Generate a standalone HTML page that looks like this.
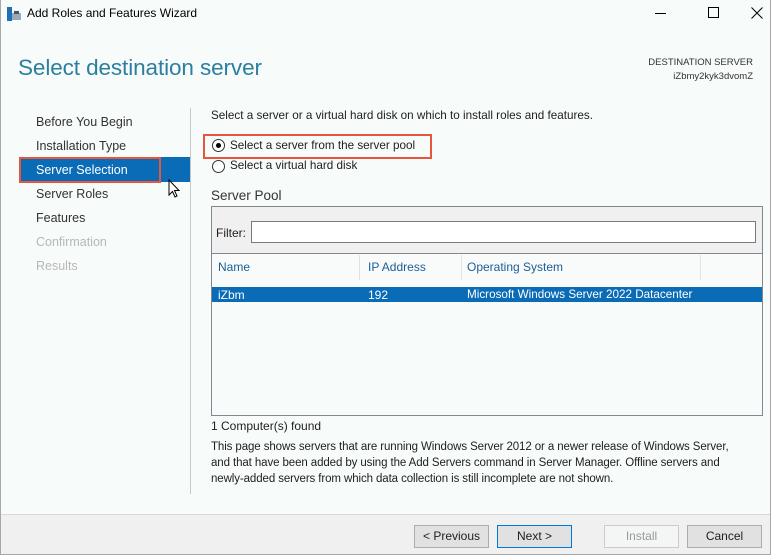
<!DOCTYPE html>
<html><head><meta charset="utf-8"><style>
*{margin:0;padding:0;box-sizing:border-box}
body{width:771px;height:555px;position:relative;background:#f7fbf9;font-family:"Liberation Sans",sans-serif;font-size:12px;color:#1e1e1e;overflow:hidden}
.a{position:absolute;white-space:nowrap}
.win{position:absolute;left:0;top:0;width:771px;height:555px;border:1px solid #a8a8a8;border-top:none}
.btn{position:absolute;top:525px;height:23px;width:75px;background:#e1e1e1;border:1px solid #adadad;text-align:center;line-height:21px;font-size:12px}
.nav{position:absolute;left:36px;font-size:12.5px;color:#333}
</style></head><body>
<div class="win"></div>
<svg class="a" style="left:6px;top:6px" width="16" height="16" viewBox="0 0 16 16"><rect x="1" y="1" width="5" height="14" fill="#1f6fb5"/><rect x="6" y="7" width="9" height="7" fill="#9ab" /><rect x="8" y="5" width="5" height="3" fill="#456"/></svg>
<div class="a" style="left:27px;top:6px;font-size:12px;color:#000">Add Roles and Features Wizard</div>
<div class="a" style="left:655px;top:13px;width:11px;height:1px;background:#000"></div>
<div class="a" style="left:708px;top:7px;width:11px;height:11px;border:1px solid #000"></div>
<svg class="a" style="left:751px;top:7px" width="12" height="12" viewBox="0 0 12 12"><path d="M0.5 0.5L11.5 11.5M11.5 0.5L0.5 11.5" stroke="#000" stroke-width="1"/></svg>
<div class="a" style="left:18px;top:55px;font-size:22.5px;color:#2c7fa0;letter-spacing:-0.1px">Select destination server</div>
<div class="a" style="right:18px;top:56px;font-size:9.5px;text-align:right;line-height:14px;color:#333">DESTINATION SERVER<br>iZbmy2kyk3dvomZ</div>
<div class="nav" style="top:115px">Before You Begin</div>
<div class="nav" style="top:139px">Installation Type</div>
<div class="a" style="left:19px;top:157px;width:171px;height:25px;background:#0a6cb6"></div>
<div class="a" style="left:19px;top:157px;width:142px;height:26px;border:2px solid #e8553a"></div>
<div class="nav" style="top:163px;color:#fff">Server Selection</div>
<div class="nav" style="top:187px">Server Roles</div>
<div class="nav" style="top:211px">Features</div>
<div class="nav" style="top:235px;color:#b8b8b8">Confirmation</div>
<div class="nav" style="top:259px;color:#b8b8b8">Results</div>
<svg class="a" style="left:168px;top:179px" width="14" height="20" viewBox="0 0 14 20"><path d="M1 1 L1 16 L4.5 12.5 L7 18 L9 17 L6.5 11.5 L11 11.5 Z" fill="#fff" stroke="#000"/></svg>
<div class="a" style="left:190px;top:108px;width:1px;height:386px;background:#c8c8c8"></div>
<div class="a" style="left:211px;top:109px;font-size:11.7px">Select a server or a virtual hard disk on which to install roles and features.</div>
<div class="a" style="left:203px;top:134px;width:229px;height:25px;border:2px solid #e8553a"></div>
<div class="a" style="left:212px;top:139px;width:13px;height:13px;border:1px solid #333;border-radius:50%;background:#fff"></div>
<div class="a" style="left:216px;top:143px;width:5px;height:5px;border-radius:50%;background:#000"></div>
<div class="a" style="left:230px;top:139px;font-size:11.7px">Select a server from the server pool</div>
<div class="a" style="left:212px;top:160px;width:13px;height:13px;border:1px solid #333;border-radius:50%;background:#fff"></div>
<div class="a" style="left:230px;top:159px;font-size:11.7px">Select a virtual hard disk</div>
<div class="a" style="left:211px;top:188px;font-size:13.5px;color:#333">Server Pool</div>
<div class="a" style="left:211px;top:206px;width:552px;height:210px;border:1px solid #828790;background:#f7fbf9"></div>
<div class="a" style="left:212px;top:207px;width:550px;height:47px;background:#f0f0f0;border-bottom:1px solid #828790"></div>
<div class="a" style="left:216px;top:226px">Filter:</div>
<div class="a" style="left:251px;top:221px;width:505px;height:22px;border:1px solid #7a7a7a;background:#fff"></div>
<div class="a" style="left:212px;top:255px;width:550px;height:25px;background:#f9fbfa"></div>
<div class="a" style="left:359px;top:255px;width:1px;height:25px;background:#e2e2e2"></div>
<div class="a" style="left:461px;top:255px;width:1px;height:25px;background:#e2e2e2"></div>
<div class="a" style="left:700px;top:255px;width:1px;height:25px;background:#e2e2e2"></div>
<div class="a" style="left:218px;top:260px;color:#1b5e96">Name</div>
<div class="a" style="left:368px;top:260px;color:#1b5e96">IP Address</div>
<div class="a" style="left:467px;top:260px;color:#1b5e96">Operating System</div>
<div class="a" style="left:212px;top:287px;width:550px;height:15px;background:#0a6cb6"></div>
<div class="a" style="left:218px;top:288px;color:#fff">iZbm</div>
<div class="a" style="left:368px;top:288px;color:#fff">192</div>
<div class="a" style="left:467px;top:288px;color:#fff;font-size:11.7px">Microsoft Windows Server 2022 Datacenter</div>
<div class="a" style="left:211px;top:419px">1 Computer(s) found</div>
<div class="a" style="left:211px;top:439px;line-height:16px;font-size:11.5px;letter-spacing:-0.1px">This page shows servers that are running Windows Server 2012 or a newer release of Windows Server,<br>and that have been added by using the Add Servers command in Server Manager. Offline servers and<br>newly-added servers from which data collection is still incomplete are not shown.</div>
<div class="a" style="left:1px;top:514px;width:769px;height:40px;background:#f0f0f0;border-top:1px solid #d8d8d8"></div>
<div class="btn" style="left:414px">&lt; Previous</div>
<div class="btn" style="left:497px;border-color:#0078d7">Next &gt;</div>
<div class="btn" style="left:604px;background:#f4f6f5;border-color:#ccc;color:#999">Install</div>
<div class="btn" style="left:687px">Cancel</div>
</body></html>
